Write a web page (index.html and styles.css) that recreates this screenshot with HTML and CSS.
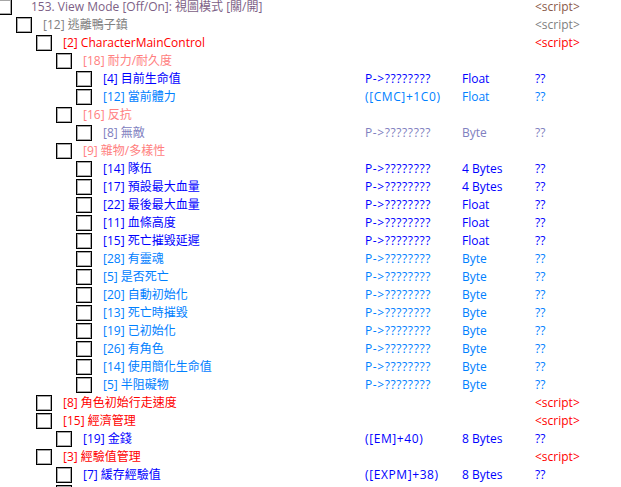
FILE: index.html
```html
<!DOCTYPE html>
<html>
<head>
<meta charset="utf-8">
<link rel="stylesheet" href="styles.css">
</head>
<body>
<div class="table">
  <div class="row c-top"><div class="tree l0"><span class="box"></span><span class="desc first">153. View Mode [Off/On]: 視圖模式 [關/開]</span></div><div class="addr"></div><div class="type"></div><div class="val c-brown">&lt;script&gt;</div></div>
  <div class="row c-gray"><div class="tree l1"><span class="box"></span><span class="desc">[12] 逃離鴨子鎮</span></div><div class="addr"></div><div class="type"></div><div class="val">&lt;script&gt;</div></div>
  <div class="row c-red"><div class="tree l2"><span class="box"></span><span class="desc">[2] CharacterMainControl</span></div><div class="addr"></div><div class="type"></div><div class="val">&lt;script&gt;</div></div>
  <div class="row c-pink"><div class="tree l3"><span class="box"></span><span class="desc">[18] 耐力/耐久度</span></div><div class="addr"></div><div class="type"></div><div class="val"></div></div>
  <div class="row c-blue"><div class="tree l4"><span class="box"></span><span class="desc">[4] 目前生命值</span></div><div class="addr">P-&gt;????????</div><div class="type">Float</div><div class="val">??</div></div>
  <div class="row c-sky"><div class="tree l4"><span class="box"></span><span class="desc">[12] 當前體力</span></div><div class="addr">([CMC]+1C0)</div><div class="type">Float</div><div class="val">??</div></div>
  <div class="row c-pink"><div class="tree l3"><span class="box"></span><span class="desc">[16] 反抗</span></div><div class="addr"></div><div class="type"></div><div class="val"></div></div>
  <div class="row c-lav"><div class="tree l4"><span class="box"></span><span class="desc">[8] 無敵</span></div><div class="addr">P-&gt;????????</div><div class="type">Byte</div><div class="val">??</div></div>
  <div class="row c-pink"><div class="tree l3"><span class="box"></span><span class="desc">[9] 雜物/多樣性</span></div><div class="addr"></div><div class="type"></div><div class="val"></div></div>
  <div class="row c-blue"><div class="tree l4"><span class="box"></span><span class="desc">[14] 隊伍</span></div><div class="addr">P-&gt;????????</div><div class="type">4 Bytes</div><div class="val">??</div></div>
  <div class="row c-blue"><div class="tree l4"><span class="box"></span><span class="desc">[17] 預設最大血量</span></div><div class="addr">P-&gt;????????</div><div class="type">4 Bytes</div><div class="val">??</div></div>
  <div class="row c-blue"><div class="tree l4"><span class="box"></span><span class="desc">[22] 最後最大血量</span></div><div class="addr">P-&gt;????????</div><div class="type">Float</div><div class="val">??</div></div>
  <div class="row c-blue"><div class="tree l4"><span class="box"></span><span class="desc">[11] 血條高度</span></div><div class="addr">P-&gt;????????</div><div class="type">Float</div><div class="val">??</div></div>
  <div class="row c-blue"><div class="tree l4"><span class="box"></span><span class="desc">[15] 死亡摧毀延遲</span></div><div class="addr">P-&gt;????????</div><div class="type">Float</div><div class="val">??</div></div>
  <div class="row c-sky"><div class="tree l4"><span class="box"></span><span class="desc">[28] 有靈魂</span></div><div class="addr">P-&gt;????????</div><div class="type">Byte</div><div class="val">??</div></div>
  <div class="row c-sky"><div class="tree l4"><span class="box"></span><span class="desc">[5] 是否死亡</span></div><div class="addr">P-&gt;????????</div><div class="type">Byte</div><div class="val">??</div></div>
  <div class="row c-sky"><div class="tree l4"><span class="box"></span><span class="desc">[20] 自動初始化</span></div><div class="addr">P-&gt;????????</div><div class="type">Byte</div><div class="val">??</div></div>
  <div class="row c-sky"><div class="tree l4"><span class="box"></span><span class="desc">[13] 死亡時摧毀</span></div><div class="addr">P-&gt;????????</div><div class="type">Byte</div><div class="val">??</div></div>
  <div class="row c-sky"><div class="tree l4"><span class="box"></span><span class="desc">[19] 已初始化</span></div><div class="addr">P-&gt;????????</div><div class="type">Byte</div><div class="val">??</div></div>
  <div class="row c-sky"><div class="tree l4"><span class="box"></span><span class="desc">[26] 有角色</span></div><div class="addr">P-&gt;????????</div><div class="type">Byte</div><div class="val">??</div></div>
  <div class="row c-sky"><div class="tree l4"><span class="box"></span><span class="desc">[14] 使用簡化生命值</span></div><div class="addr">P-&gt;????????</div><div class="type">Byte</div><div class="val">??</div></div>
  <div class="row c-sky"><div class="tree l4"><span class="box"></span><span class="desc">[5] 半阻礙物</span></div><div class="addr">P-&gt;????????</div><div class="type">Byte</div><div class="val">??</div></div>
  <div class="row c-red"><div class="tree l2"><span class="box"></span><span class="desc">[8] 角色初始行走速度</span></div><div class="addr"></div><div class="type"></div><div class="val">&lt;script&gt;</div></div>
  <div class="row c-red"><div class="tree l2"><span class="box"></span><span class="desc">[15] 經濟管理</span></div><div class="addr"></div><div class="type"></div><div class="val">&lt;script&gt;</div></div>
  <div class="row c-blue"><div class="tree l3"><span class="box"></span><span class="desc">[19] 金錢</span></div><div class="addr">([EM]+40)</div><div class="type">8 Bytes</div><div class="val">??</div></div>
  <div class="row c-red"><div class="tree l2"><span class="box"></span><span class="desc">[3] 經驗值管理</span></div><div class="addr"></div><div class="type"></div><div class="val">&lt;script&gt;</div></div>
  <div class="row c-blue"><div class="tree l3"><span class="box"></span><span class="desc">[7] 緩存經驗值</span></div><div class="addr">([EXPM]+38)</div><div class="type">8 Bytes</div><div class="val">??</div></div>
  <div class="row c-blue"><div class="tree l3"><span class="box"></span></div><div class="addr"></div><div class="type"></div><div class="val"></div></div>
</div>
</body>
</html>
```
FILE: styles.css
```css
html, body {
  margin: 0;
  padding: 0;
  background: #ffffff;
  overflow: hidden;
}
body {
  font-family: "Open Sans", "Noto Sans CJK TC", sans-serif;
  font-size: 12px;
}
.table {
  margin-top: -2px;
  display: flex;
  flex-direction: column;
}
.row {
  display: grid;
  grid-template-columns: 365px 97px 73px 1fr;
  height: 18px;
  align-items: center;
  white-space: nowrap;
}
.tree {
  display: flex;
  align-items: center;
  overflow: visible;
}
.l0 { padding-left: 0; margin-left: -4px; }
.l1 { padding-left: 16px; }
.l2 { padding-left: 36px; }
.l3 { padding-left: 56px; }
.l4 { padding-left: 76px; }
.box {
  width: 14px;
  height: 14px;
  border: 1px solid #000;
  box-shadow: inset 0 0 0 1px rgba(0, 0, 0, 0.35);
  box-sizing: content-box;
  flex: none;
  background: #fff;
}
.desc {
  margin-left: 11px;
  line-height: 14px;
}
.desc.first { margin-left: 19px; }
.addr, .type, .val { line-height: 14px; }
.addr { letter-spacing: 0.6px; }

.c-top { color: #7d5f86; }
.c-brown { color: #8a5a4a; }
.c-gray { color: #808080; }
.c-red { color: #ff0000; }
.c-pink { color: #ff8080; }
.c-blue { color: #0000ff; }
.c-sky { color: #0080ff; }
.c-lav { color: #8080c0; }
```
